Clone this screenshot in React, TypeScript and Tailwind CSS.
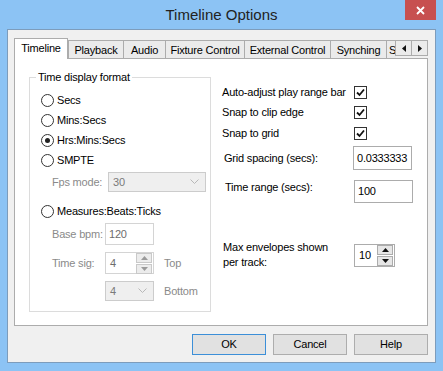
import React from 'react';

function Radio({ label, checked }: { label: string; checked?: boolean }) {
  return (
    <div className="h-[20px] flex items-center pl-[11px] gap-[3px]">
      <span className="w-[13px] h-[13px] rounded-full border border-[#333333] bg-white flex items-center justify-center">
        {checked && <span className="w-[5px] h-[5px] rounded-full bg-[#222222]" />}
      </span>
      <span>{label}</span>
    </div>
  );
}

function Check() {
  return (
    <span className="w-[13px] h-[13px] border border-[#333333] bg-white flex items-center justify-center">
      <svg width="9" height="9" viewBox="0 0 9 9">
        <path d="M1 4.5 L3.5 7 L8 1.5" fill="none" stroke="#111" strokeWidth="1.8" />
      </svg>
    </span>
  );
}

function CheckRow({ label, className = '' }: { label: string; className?: string }) {
  return (
    <div className={`h-[20px] flex items-center ${className}`}>
      <span className="w-[132px]">{label}</span>
      <Check />
    </div>
  );
}

function Chevron() {
  return (
    <svg width="9" height="6" viewBox="0 0 9 6" className="ml-auto mr-[6px]">
      <path d="M0.5 0.5 L4.5 4.5 L8.5 0.5" fill="none" stroke="#b8b8b8" strokeWidth="1" />
    </svg>
  );
}

function Spin({ disabled }: { disabled?: boolean }) {
  const arrow = disabled ? '#9a9a9a' : '#111';
  const btn = 'w-[16px] h-[10px] border flex items-center justify-center ' +
    (disabled ? 'border-[#c9c9c9] bg-[#ececec]' : 'border-[#acacac] bg-[#e6e6e6]');
  return (
    <div className="ml-auto mr-px flex flex-col gap-px">
      <span className={btn}>
        <svg width="7" height="4" viewBox="0 0 7 4"><path d="M0 4 L3.5 0 L7 4 Z" fill={arrow} /></svg>
      </span>
      <span className={btn}>
        <svg width="7" height="4" viewBox="0 0 7 4"><path d="M0 0 L3.5 4 L7 0 Z" fill={arrow} /></svg>
      </span>
    </div>
  );
}

function Tab({ label, w, selected, first }: { label: string; w: string; selected?: boolean; first?: boolean }) {
  if (selected) {
    return (
      <div className={`${w} h-[21px] relative z-10 bg-white border border-b-0 border-[#acacac] flex items-center justify-center pb-[2px]`}>
        {label}
      </div>
    );
  }
  return (
    <div className={`${w} h-[19px] ${first ? '' : '-ml-px'} bg-[#ebebeb] border border-b-0 border-[#acacac] flex items-center justify-center shrink-0 whitespace-nowrap`}>
      {label}
    </div>
  );
}

function Button({ label, primary }: { label: string; primary?: boolean }) {
  return (
    <div className={`w-[74px] h-[21px] flex items-center justify-center bg-[#e1e1e1] border ${primary ? 'border-[#3c8fd8]' : 'border-[#adadad]'}`}>
      {label}
    </div>
  );
}

export default function App() {
  return (
    <div className="w-[443px] h-[371px] bg-[#8cc3f4] flex flex-col font-['Liberation_Sans',Arial,sans-serif] text-[11px] tracking-[-0.2px] text-black overflow-hidden">
      {/* title bar */}
      <div className="h-[29px] relative flex justify-end items-start pr-[7px] shrink-0">
        <div className="absolute inset-x-0 top-[6px] text-center text-[15px] tracking-normal text-[#222222] leading-[18px]">
          Timeline Options
        </div>
        <div className="w-[31px] h-[20px] bg-[#c75050] flex items-center justify-center relative">
          <svg width="9" height="9" viewBox="0 0 9 9">
            <path d="M1 1 L8 8 M8 1 L1 8" stroke="#fff" strokeWidth="1.8" />
          </svg>
        </div>
      </div>

      {/* client area */}
      <div className="mx-[7px] h-[334px] border border-[#7d9cbb] bg-[#f0f0f0] pl-[6px] pr-[7px] pt-[8px] flex flex-col">
        {/* tabs */}
        <div className="h-[21px] -mb-px flex items-end">
          <Tab label="Timeline" w="w-[55px]" selected />
          <Tab label="Playback" w="w-[56px]" first />
          <Tab label="Audio" w="w-[43px]" />
          <Tab label="Fixture Control" w="w-[80px]" />
          <Tab label="External Control" w="w-[87px]" />
          <Tab label="Synching" w="w-[57px]" />
          <div className="w-[10px] -ml-px h-[19px] overflow-hidden shrink-0 bg-[#ebebeb] border border-b-0 border-r-0 border-[#acacac] pl-[2px] flex items-center">
            S
          </div>
          <div className="self-start mt-[2px] -ml-px flex">
            <span className="w-[17px] h-[16px] bg-[#ebebeb] border border-[#acacac] flex items-center justify-center">
              <svg width="4" height="7" viewBox="0 0 4 7"><path d="M4 0 L0 3.5 L4 7 Z" fill="#111" /></svg>
            </span>
            <span className="w-[17px] h-[16px] -ml-px bg-[#ebebeb] border border-[#acacac] flex items-center justify-center">
              <svg width="4" height="7" viewBox="0 0 4 7"><path d="M0 0 L4 3.5 L0 7 Z" fill="#111" /></svg>
            </span>
          </div>
        </div>

        {/* tab panel */}
        <div className="h-[268px] bg-white border border-[#acacac] flex items-start pl-[14px] pt-[18px]">
          {/* group box */}
          <div className="w-[182px] h-[235px] border border-[#dcdcdc] relative pt-[12px] shrink-0">
            <span className="absolute -top-[8px] left-[6px] bg-white px-[2px] leading-[14px]">Time display format</span>
            <Radio label="Secs" />
            <Radio label="Mins:Secs" />
            <Radio label="Hrs:Mins:Secs" checked />
            <Radio label="SMPTE" />
            <div className="mt-[2px] h-[20px] flex items-center pl-[22px]">
              <span className="w-[56px] text-[#8a8a8a]">Fps mode:</span>
              <div className="w-[98px] h-[20px] border border-[#cccccc] bg-[#efefef] flex items-center pl-[4px] text-[#7a7a7a]">
                30
                <Chevron />
              </div>
            </div>
            <div className="mt-[9px]">
              <Radio label="Measures:Beats:Ticks" />
            </div>
            <div className="mt-[2px] h-[22px] flex items-center pl-[22px]">
              <span className="w-[53px] text-[#8a8a8a]">Base bpm:</span>
              <div className="w-[49px] h-[22px] border border-[#d4d4d4] bg-white flex items-center pl-[3px] text-[#6d6d6d]">120</div>
            </div>
            <div className="mt-[7px] h-[22px] flex items-center pl-[22px]">
              <span className="w-[53px] text-[#8a8a8a]">Time sig:</span>
              <div className="w-[49px] h-[22px] border border-[#d4d4d4] bg-white flex items-center pl-[4px] text-[#6d6d6d]">
                4
                <Spin disabled />
              </div>
              <span className="ml-[10px] text-[#8a8a8a]">Top</span>
            </div>
            <div className="mt-[7px] h-[20px] flex items-center pl-[22px]">
              <span className="w-[53px]" />
              <div className="w-[49px] h-[20px] border border-[#cccccc] bg-[#efefef] flex items-center pl-[4px] text-[#7a7a7a]">
                4
                <Chevron />
              </div>
              <span className="ml-[10px] text-[#8a8a8a]">Bottom</span>
            </div>
          </div>

          {/* right column */}
          <div className="ml-[11px] mt-[5px] flex flex-col">
            <CheckRow label="Auto-adjust play range bar" />
            <CheckRow label="Snap to clip edge" />
            <CheckRow label="Snap to grid" className="mt-px" />
            <div className="mt-[3px] h-[24px] flex items-center">
              <span className="w-[131px] pl-[2px]">Grid spacing (secs):</span>
              <div className="w-[59px] h-[24px] border border-[#acacac] bg-white flex items-center pl-[3px]">0.0333333</div>
            </div>
            <div className="mt-[10px] h-[23px] flex items-start">
              <span className="w-[132px] pl-[3px] leading-[14px]">Time range (secs):</span>
              <div className="w-[59px] h-[23px] border border-[#acacac] bg-white flex items-center pl-[3px]">100</div>
            </div>
            <div className="mt-[37px] flex items-start">
              <span className="w-[132px] pl-px leading-[15px]">
                Max envelopes shown
                <br />
                per track:
              </span>
              <div className="mt-[4px] w-[41px] h-[23px] border border-[#acacac] bg-white flex items-center pl-[4px]">
                10
                <Spin />
              </div>
            </div>
          </div>
        </div>

        {/* dialog buttons */}
        <div className="mt-[8px] flex justify-end gap-[7px]">
          <Button label="OK" primary />
          <Button label="Cancel" />
          <Button label="Help" />
        </div>
      </div>
    </div>
  );
}
